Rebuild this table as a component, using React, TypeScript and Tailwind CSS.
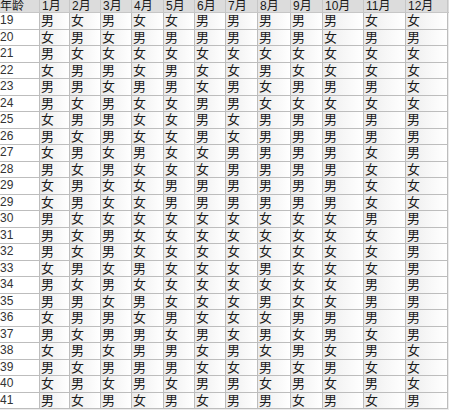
const months = ['1月', '2月', '3月', '4月', '5月', '6月', '7月', '8月', '9月', '10月', '11月', '12月'];

// age, then 12 months (男 = M, 女 = F)
const rows: [string, string][] = [
  ['19', '男女男女女男男男男男女女'],
  ['20', '女男女男男男男男男女男男'],
  ['21', '男女女女女女女女女女女女'],
  ['22', '女男男女男女女男女女女女'],
  ['23', '男男女男男女男女男男男女'],
  ['24', '男女男女女男男女女女女女'],
  ['25', '女男男女女男女男男男男男'],
  ['26', '男女男女女男女男男男男男'],
  ['27', '女男女男女女男男男男女男'],
  ['28', '男女男女女女男男男男女女'],
  ['29', '女男女女男男男男男男女女'],
  ['29', '女男女女男男男男男男女女'],
  ['30', '男女女女女女女女女女男男'],
  ['31', '男女男女女女女女女女女男'],
  ['32', '男女男女女女女女女女女男'],
  ['33', '女男女男女女女男女女女男'],
  ['34', '男女男女女女女女女女男男'],
  ['35', '男男女男女女女男女女男男'],
  ['36', '女男男女男女女女男男男男'],
  ['37', '男女男男女男女男女男女男'],
  ['38', '女男女男男女男女男女男女'],
  ['39', '男女男男男女女男女男女女'],
  ['40', '女男女男女男男女男女男女'],
  ['41', '男女男女男女男男女男女男'],
];

const gridCols =
  'grid grid-cols-[40px_30px_31px_31px_32px_31px_31px_32px_33px_32px_41px_42px_42px]';

export default function App() {
  return (
    <div
      className="w-[449px] h-[410px] overflow-hidden bg-[#ececec] text-[#1a1a1a]"
      style={{ fontFamily: '"Liberation Sans", "Noto Sans CJK SC", sans-serif' }}
    >
      {/* Header */}
      <div className={`${gridCols} h-[13px] bg-[#dcdcdc] border-b border-[#c6c6c6]`}>
        <div className="text-[12px] leading-[12px] border-r border-[#c6c6c6]">年龄</div>
        {months.map((m) => (
          <div key={m} className="pl-[2px] text-[12px] leading-[12px] border-r border-[#c6c6c6]">
            {m}
          </div>
        ))}
      </div>

      {/* Rows */}
      {rows.map(([age, vals], i) => (
        <div key={i} className={`${gridCols} ${i % 2 === 0 ? 'h-[17px]' : 'h-[16px]'}`}>
          <div className="bg-white border-b border-r border-[#bdbdbd] text-[12px] leading-[15px] text-[#333]">
            {age}
          </div>
          {vals.split('').map((v, j) => (
            <div
              key={j}
              className="pl-[1px] bg-gradient-to-r from-[#ebebeb] via-[#f6f6f6] to-white border-b border-r border-[#bdbdbd] text-[13px] leading-[15px]"
            >
              {v}
            </div>
          ))}
        </div>
      ))}
    </div>
  );
}
